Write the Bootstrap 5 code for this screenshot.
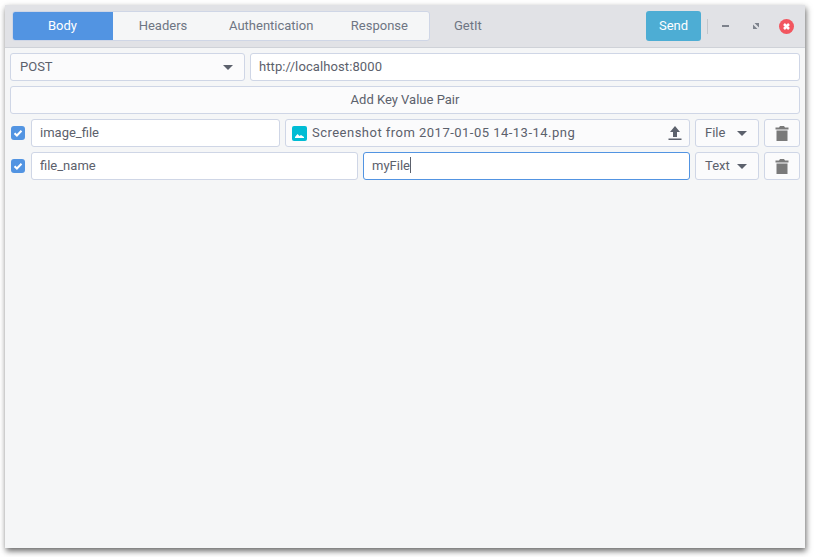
<!DOCTYPE html>
<html lang="en">

<head>
  <meta charset="UTF-8" />
  <title>GetIt</title>
  <meta name="viewport" content="width=device-width, initial-scale=1" />
  <link href="https://cdn.jsdelivr.net/npm/bootstrap@5.3.0/dist/css/bootstrap.min.css" rel="stylesheet" />

  <style>
    body {
      background-color: #fff;
      color: #5c616c;
      font-family: Roboto, "Noto Sans", sans-serif;
      font-size: 13px;
      padding: 5px 9px 9px 5px;
    }

    .app-window {
      width: 800px;
      height: 543px;
      background-color: #f5f6f7;
      box-shadow: 1px 3px 6px rgba(0, 0, 0, 0.6);
    }

    .app-header {
      height: 43px;
      padding: 6px 4px 0 7px;
      background-color: #e1e2e6;
      border-bottom: 1px solid #cfd2d8;
    }

    .tab-group {
      height: 30px;
      background-color: #f5f6f7;
      border: 1px solid #cfd6e6;
      border-radius: 3px;
      overflow: hidden;
    }

    .tab-item {
      min-width: 100px;
      padding: 0 16px;
      color: #6e7583;
      line-height: 28px;
      text-align: center;
    }

    .tab-item.is-active {
      width: 101px;
      margin: -1px 0 -1px -1px;
      line-height: 30px;
      background-color: #5294e2;
      color: #fff;
    }

    .app-title {
      width: 75px;
      color: #6e7583;
      line-height: 30px;
      text-align: center;
    }

    .btn.send-btn {
      width: 55px;
      height: 30px;
      padding: 0;
      font-size: 13px;
      color: #fff;
      background-color: #4dadd4;
      border: 0;
      border-radius: 3px;
    }

    .title-sep {
      width: 1px;
      height: 15px;
      margin: 0 3px 0 6px;
      background-color: #c4c7cc;
    }

    .win-btn {
      width: 30px;
      height: 30px;
    }

    .app-body {
      padding: 5px 5px 0 5px;
      gap: 5px;
    }

    .kv-row {
      gap: 5px;
    }

    .form-control.field,
    .btn.field-btn {
      height: 28px;
      padding: 0 8px 2px;
      font-size: 13px;
      color: #5c616c;
      border: 1px solid #cfd6e6;
      border-radius: 3px;
      box-shadow: none;
    }

    .btn.field-btn {
      padding-bottom: 0;
      background-color: #fbfbfc;
    }

    .form-control.field.is-focused {
      border-color: #5294e2;
      padding-bottom: 0;
      line-height: 25px;
    }

    .text-caret {
      display: inline-block;
      width: 1px;
      height: 16px;
      background-color: #5c616c;
      vertical-align: -3px;
    }

    .btn.method-btn,
    .btn.type-btn {
      padding: 0 11px 0 9px;
    }

    .btn.method-btn {
      flex: 0 0 235px;
    }

    .btn.type-btn {
      flex: 0 0 64px;
    }

    .del-btn {
      flex: 0 0 36px;
    }

    .btn.file-btn {
      padding: 0 7px 0 6px;
      min-width: 0;
      gap: 5px;
    }

    .file-label {
      letter-spacing: 0.48px;
    }

    .form-control.url-input {
      letter-spacing: 0.1px;
    }

    .form-control.key-narrow {
      flex: 0 0 249px;
      width: 249px;
    }

    .form-control.key-wide {
      flex: 0 0 327px;
      width: 327px;
    }

    .form-control.val-fill {
      flex: 1 1 0;
      width: auto;
      min-width: 0;
    }

    .kv-check {
      width: 14px;
      height: 14px;
      margin: 0 1px 0 1px;
      flex: none;
      border-radius: 3px;
      background-color: #5294e2;
    }

    .caret-down {
      flex: none;
      width: 0;
      height: 0;
      border-left: 5px solid transparent;
      border-right: 5px solid transparent;
      border-top: 5px solid #5c616c;
    }
  </style>
</head>

<body>

  <div class="app-window d-flex flex-column">
    <header class="app-header d-flex align-items-start">
      <nav class="tab-group d-flex">
        <div class="tab-item is-active">Body</div>
        <div class="tab-item">Headers</div>
        <div class="tab-item">Authentication</div>
        <div class="tab-item">Response</div>
      </nav>
      <div class="app-title">GetIt</div>
      <div class="ms-auto d-flex align-items-center">
        <button class="btn send-btn" type="button">Send</button>
        <span class="title-sep"></span>
        <span class="win-btn d-flex align-items-center justify-content-center">
          <svg width="12" height="12" viewBox="0 0 12 12"><rect x="2" y="5" width="7" height="2" fill="#7d828c" /></svg>
        </span>
        <span class="win-btn d-flex align-items-center justify-content-center">
          <svg width="12" height="12" viewBox="0 0 12 12"><path d="M4.5 3H9V7.5ZM7.5 9H3V4.5Z" fill="#7d828c" /></svg>
        </span>
        <span class="win-btn d-flex align-items-center justify-content-center">
          <svg width="15" height="15" viewBox="0 0 15 15">
            <circle cx="7.5" cy="7.5" r="7.5" fill="#f2565f" />
            <path d="M5 5l5 5M10 5l-5 5" stroke="#fff" stroke-width="2.5" />
          </svg>
        </span>
      </div>
    </header>

    <main class="app-body d-flex flex-column">
      <div class="kv-row d-flex">
        <button class="btn field-btn method-btn d-flex align-items-center justify-content-between" type="button">
          POST <span class="caret-down"></span>
        </button>
        <input class="form-control field url-input val-fill" type="text" value="http://localhost:8000" />
      </div>

      <button class="btn field-btn w-100" type="button">Add Key Value Pair</button>

      <div class="kv-row d-flex align-items-center">
        <svg class="kv-check" viewBox="0 0 14 14"><path d="M3.5 7.2l2.4 2.3 4.6-4.8" fill="none" stroke="#fff" stroke-width="2" /></svg>
        <input class="form-control field key-narrow" type="text" value="image_file" />
        <button class="btn field-btn file-btn flex-fill d-flex align-items-center" type="button">
          <svg width="15" height="15" viewBox="0 0 15 15">
            <rect width="15" height="15" rx="2" fill="#00bcd4" />
            <path d="M3 12V11L5.5 8 7.5 10 9 9 12 11V12Z" fill="#fff" />
          </svg>
          <span class="file-label">Screenshot from 2017-01-05 14-13-14.png</span>
          <svg class="ms-auto" width="14" height="16" viewBox="0 0 14 16">
            <path d="M7 1L12 7H9V12H5V7H2Z M0.5 13.5H13.5V15H0.5Z" fill="#5c616c" />
          </svg>
        </button>
        <button class="btn field-btn type-btn d-flex align-items-center justify-content-between" type="button">
          File <span class="caret-down"></span>
        </button>
        <button class="btn field-btn del-btn d-flex align-items-center justify-content-center" type="button" aria-label="Delete">
          <svg width="14" height="15" viewBox="0 0 14 15"><path d="M5 0H9L10 1.5H13.5V3.5H0.5V1.5H4ZM1.5 4.5H12.5V15H1.5Z" fill="#7a7a7a" /></svg>
        </button>
      </div>

      <div class="kv-row d-flex align-items-center">
        <svg class="kv-check" viewBox="0 0 14 14"><path d="M3.5 7.2l2.4 2.3 4.6-4.8" fill="none" stroke="#fff" stroke-width="2" /></svg>
        <input class="form-control field key-wide" type="text" value="file_name" />
        <div class="form-control field is-focused val-fill">myFile<span class="text-caret"></span></div>
        <button class="btn field-btn type-btn d-flex align-items-center justify-content-between" type="button">
          Text <span class="caret-down"></span>
        </button>
        <button class="btn field-btn del-btn d-flex align-items-center justify-content-center" type="button" aria-label="Delete">
          <svg width="14" height="15" viewBox="0 0 14 15"><path d="M5 0H9L10 1.5H13.5V3.5H0.5V1.5H4ZM1.5 4.5H12.5V15H1.5Z" fill="#7a7a7a" /></svg>
        </button>
      </div>
    </main>
  </div>

  <script src="https://cdn.jsdelivr.net/npm/bootstrap@5.3.0/dist/js/bootstrap.bundle.min.js"></script>
</body>

</html>
